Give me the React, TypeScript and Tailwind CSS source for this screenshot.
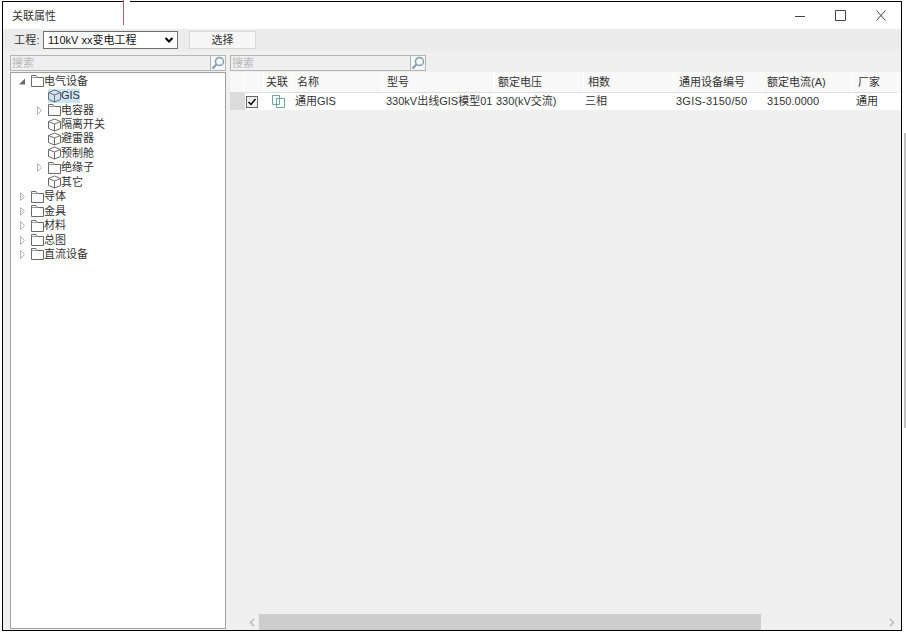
function Folder() {
  return (
    <svg width="13" height="14" viewBox="0 0 13 14" className="shrink-0" fill="none" stroke="#6a6a6a" strokeWidth="1">
      <path d="M.5 12.5V1.5H5L6.5 3.5H12.5V12.5Z" />
      <path d="M.5 3.5H6.5" stroke="#999" />
    </svg>
  );
}
function Cube() {
  return (
    <svg width="13" height="14" viewBox="0 0 13 14" className="shrink-0" fill="none" stroke="#6a6a6a" strokeWidth="1">
      <path d="M6.5 1L12.5 3.5V10.5L6.5 13L.5 10.5V3.5Z" />
      <path d="M.5 3.5L6.5 6L12.5 3.5M6.5 6V13" />
    </svg>
  );
}
function Arrow({ open }: { open?: boolean }) {
  return (
    <svg width="7" height="9" viewBox="0 0 7 9" className="shrink-0">
      {open ? <path d="M0 7.5L6 7.5L6 1.5Z" fill="#666" /> : <path d="M1.5 0.5L5.5 4.5L1.5 8.5Z" fill="#fff" stroke="#b4b4b4" />}
    </svg>
  );
}
function SearchIcon() {
  return (
    <svg width="14" height="14" viewBox="0 0 14 14" fill="none" stroke="#7d9db5" strokeWidth="1.4">
      <circle cx="8.5" cy="5.5" r="4" />
      <path d="M5.5 8.5L1.5 12.5" strokeWidth="2" />
    </svg>
  );
}
function Search({ width }: { width: string }) {
  return (
    <div className={`flex h-[16px] items-center justify-between border border-[#b4b4b4] bg-[#efefef] ${width}`}>
      <span className="pl-[1px] text-[11px] leading-none text-[#b8b8b8]">搜索</span>
      <span className="flex h-full w-[15px] items-center justify-center border-l border-[#b4b4b4] bg-[#f6f6f6]"><SearchIcon /></span>
    </div>
  );
}
type Node = { label: string; icon: "folder" | "cube"; arrow?: "open" | "closed"; level: number; selected?: boolean };
const nodes: Node[] = [
  { label: "电气设备", icon: "folder", arrow: "open", level: 0 },
  { label: "GIS", icon: "cube", level: 1, selected: true },
  { label: "电容器", icon: "folder", arrow: "closed", level: 1 },
  { label: "隔离开关", icon: "cube", level: 1 },
  { label: "避雷器", icon: "cube", level: 1 },
  { label: "预制舱", icon: "cube", level: 1 },
  { label: "绝缘子", icon: "folder", arrow: "closed", level: 1 },
  { label: "其它", icon: "cube", level: 1 },
  { label: "导体", icon: "folder", arrow: "closed", level: 0 },
  { label: "金具", icon: "folder", arrow: "closed", level: 0 },
  { label: "材料", icon: "folder", arrow: "closed", level: 0 },
  { label: "总图", icon: "folder", arrow: "closed", level: 0 },
  { label: "直流设备", icon: "folder", arrow: "closed", level: 0 },
];
function TreeRow({ n }: { n: Node }) {
  return (
    <div className={`flex h-[14.45px] items-center ${n.level === 1 ? "pl-[25px]" : "pl-[8px]"}`}>
      <span className="flex w-[12px] shrink-0 items-center">{n.arrow && <Arrow open={n.arrow === "open"} />}</span>
      <span className={`flex h-[14px] items-center ${n.selected ? "bg-[#cce4f7]" : ""}`}>
        {n.icon === "folder" ? <Folder /> : <Cube />}
        <span className="whitespace-nowrap text-[11px] leading-none text-[#333]">{n.label}</span>
      </span>
    </div>
  );
}
const cols = [
  { t: "", w: "w-[15px] pl-[2px]" },
  { t: "", w: "w-[19px] pl-[2px]" },
  { t: "关联", w: "w-[29px] pl-[2px]" },
  { t: "名称", w: "w-[90px] pl-[4px]" },
  { t: "型号", w: "w-[111px] pl-[4px]" },
  { t: "额定电压", w: "w-[90px] pl-[4px]" },
  { t: "相数", w: "w-[90px] pl-[4px]" },
  { t: "通用设备编号", w: "w-[89px] pl-[5px]" },
  { t: "额定电流(A)", w: "w-[90px] pl-[4px]" },
  { t: "厂家", w: "w-[45px] pl-[5px]" },
];
const cells = [
  { t: "通用GIS", c: "w-[90px] pl-[2px]" },
  { t: "330kV出线GIS模型01", c: "w-[111px] pl-[3px]" },
  { t: "330(kV交流)", c: "w-[90px] pl-[2px]" },
  { t: "三相", c: "w-[90px] pl-[1px]" },
  { t: "3GIS-3150/50", c: "w-[89px] pl-[2px] tracking-[0.25px]" },
  { t: "3150.0000", c: "w-[90px] pl-[4px]" },
  { t: "通用", c: "w-[45px] pl-[3px]" },
];
export default function App() {
  return (
    <div className="relative h-[635px] w-[906px] overflow-hidden bg-white pl-[2px] pt-[1px]" style={{ fontFamily: '"Liberation Sans","Noto Sans CJK SC",sans-serif' }}>
      <div className="absolute left-[123px] top-0 h-[25px] w-[1px] bg-[#b0606f]" />
      <div className="absolute left-[124px] top-[1px] h-[1px] w-[6px] bg-white" />
      <div className="absolute left-[904px] top-[133px] h-[295px] w-[2px] bg-[#c0c0c0]" />
      <div className="flex h-[630px] w-[900px] flex-col border border-black bg-[#f0f0f0]">
        <div className="flex h-[27px] items-center justify-between bg-white pl-[9px] text-[11px] text-[#333]">
          <span className="pt-[1px]">关联属性</span>
          <div className="flex items-center gap-[30px] pr-[15px]">
            <svg width="10" height="11" viewBox="0 0 10 11" stroke="#444" fill="none"><path d="M0 6.5H10" /></svg>
            <svg width="11" height="11" viewBox="0 0 11 11" stroke="#444" fill="none"><path d="M.5 .5H10.5V10.5H.5Z" /></svg>
            <svg width="10" height="11" viewBox="0 0 10 11" stroke="#444" fill="none"><path d="M.5 .5L9.5 10.5M9.5 .5L.5 10.5" /></svg>
          </div>
        </div>
        <div className="flex h-[22px] items-center bg-[#ececec] pl-[11px] text-[11px] text-[#333]">
          <span className="tracking-[0.3px]">工程:</span>
          <div className="ml-[3px] flex h-[18px] w-[135px] items-center justify-between border border-[#6e6e6e] bg-white pl-[4px] pr-[3px]">
            <span className="whitespace-nowrap text-[11px] text-[#111]">110kV xx变电工程</span>
            <svg width="10" height="8" viewBox="0 0 10 8" fill="none" stroke="#000" strokeWidth="2"><path d="M1.5 2L5 5.5L8.5 2" /></svg>
          </div>
          <div className="ml-[11px] flex h-[18px] w-[67px] items-center justify-center border border-[#d8d8d8] bg-[#f7f7f7] text-[11px]">选择</div>
        </div>
        <div className="flex min-h-0 flex-1 pl-[7px] pt-[4px]">
          <div className="flex w-[216px] shrink-0 flex-col pb-[1px]">
            <Search width="w-[216px]" />
            <div className="mt-[1px] flex-1 border border-[#a0a0a8] bg-white pt-[1px]">
              {nodes.map((n) => <TreeRow key={n.label} n={n} />)}
            </div>
          </div>
          <div className="ml-[4px] flex min-w-0 flex-1 flex-col">
            <Search width="w-[196px]" />
            <div className="mt-[1px] flex h-[21px] bg-[#f8f8f8]">
              {cols.map((c, i) => (
                <div key={i} className={`flex shrink-0 items-center border-r border-b border-r-white border-b-[#dcdcdc] text-[11px] text-[#333] ${c.w}`}>{c.t}</div>
              ))}
            </div>
            <div className="flex h-[17px] items-center bg-white text-[11px] text-[#333]">
              <div className="h-full w-[15px] shrink-0 bg-[#dcdcdc]" />
              <div className="flex w-[19px] shrink-0 items-center pl-[1px]">
                <div className="flex h-[12px] w-[12px] items-center justify-center border border-[#666] bg-[#f0f0f0]">
                  <svg width="10" height="10" viewBox="0 0 10 10" fill="none" stroke="#000" strokeWidth="1.5"><path d="M1.5 5L4 7.5L8.5 2" /></svg>
                </div>
              </div>
              <div className="flex w-[29px] shrink-0 pl-[8px]">
                <svg width="13" height="13" viewBox="0 0 13 13" fill="none" stroke="#6aa898"><path d="M.5 .5H7.5V9.5H.5Z" /><path d="M4.5 3.5H12.5V12.5H4.5Z" /></svg>
              </div>
              {cells.map((c) => (
                <div key={c.t} className={`shrink-0 overflow-hidden whitespace-nowrap ${c.c}`}>{c.t}</div>
              ))}
            </div>
            <div className="flex-1" />
            <div className="flex h-[16px] items-center pl-[19px]">
              <svg width="7" height="9" viewBox="0 0 7 9" fill="none" stroke="#b4b4b4" strokeWidth="1.4"><path d="M5 1L1.5 4.5L5 8" /></svg>
              <div className="ml-[3px] h-full w-[502px] bg-[#cdcdcd]" />
              <div className="flex-1" />
              <svg className="mr-[6px]" width="7" height="9" viewBox="0 0 7 9" fill="none" stroke="#b4b4b4" strokeWidth="1.4"><path d="M2 1L5.5 4.5L2 8" /></svg>
            </div>
          </div>
        </div>
      </div>
    </div>
  );
}
